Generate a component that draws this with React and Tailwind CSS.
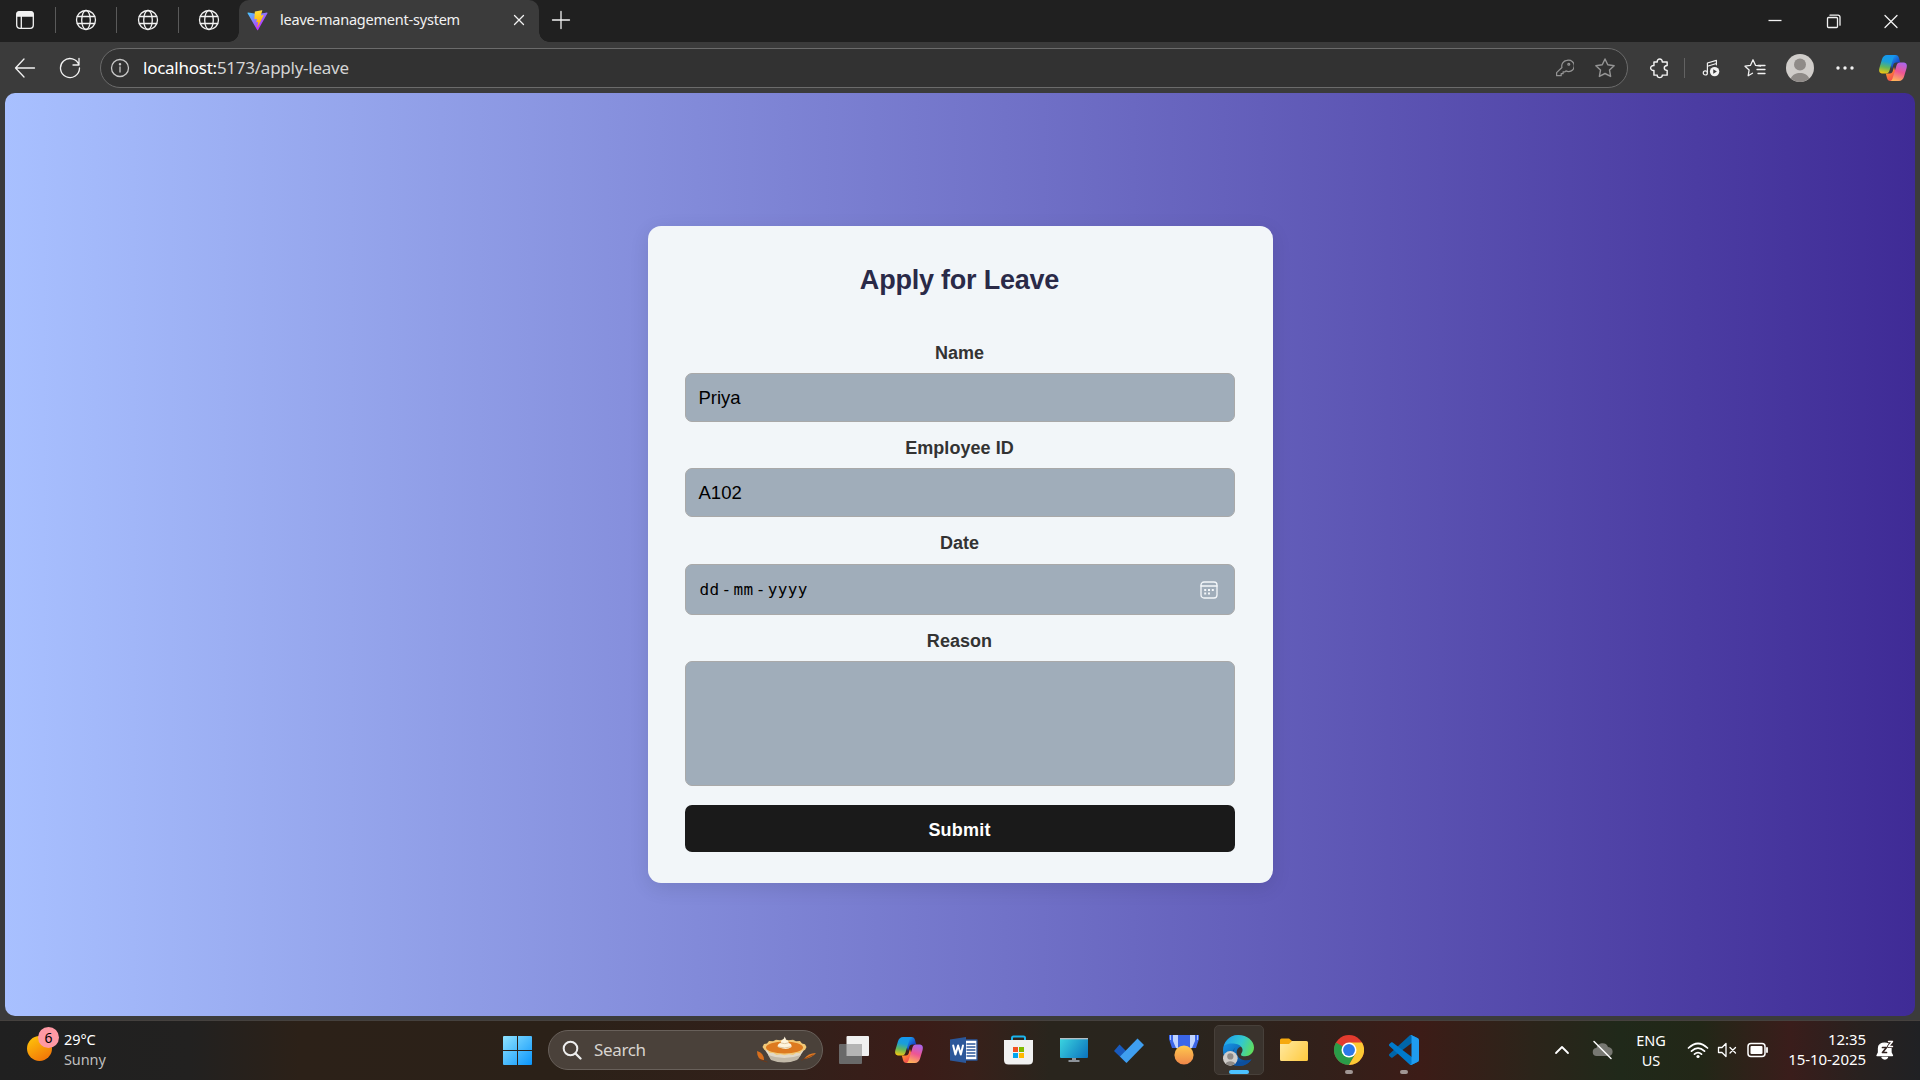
const ui = "font-['Noto_Sans','Segoe_UI',sans-serif]";

function Svg({ w = 20, h = w, vb = "0 0 20 20", className = "", children }) {
  return (
    <svg width={w} height={h} viewBox={vb} className={"block shrink-0 " + className} fill="none" stroke="currentColor" strokeWidth="1.3" strokeLinecap="round" strokeLinejoin="round">
      {children}
    </svg>
  );
}

const Globe = () => (
  <Svg w={22} vb="0 0 22 22">
    <circle cx="11" cy="11" r="9.5" />
    <ellipse cx="11" cy="11" rx="4.3" ry="9.5" />
    <path d="M2.4 7.5h17.2M2.4 14.5h17.2" />
  </Svg>
);

const Vite = () => (
  <Svg w={21} vb="0 0 410 404">
    <defs>
      <linearGradient id="va" x1="6" y1="33" x2="235" y2="344" gradientUnits="userSpaceOnUse"><stop stopColor="#41D1FF" /><stop offset="1" stopColor="#BD34FE" /></linearGradient>
      <linearGradient id="vb" x1="194" y1="9" x2="236" y2="292" gradientUnits="userSpaceOnUse"><stop stopColor="#FFEA83" /><stop offset=".08" stopColor="#FFDD35" /><stop offset="1" stopColor="#FFA800" /></linearGradient>
    </defs>
    <path stroke="none" fill="url(#va)" d="M399.641 59.525 215.643 388.545C211.844 395.338 202.084 395.378 198.228 388.618L10.582 59.556C6.381 52.19 12.68 43.267 21.028 44.759L205.223 77.682C206.398 77.892 207.601 77.89 208.776 77.676L389.119 44.806C397.439 43.289 403.768 52.143 399.641 59.525Z" />
    <path stroke="none" fill="url(#vb)" d="M292.965 1.574 156.801 28.255C154.563 28.694 152.906 30.59 152.771 32.866L144.395 174.33C144.198 177.662 147.258 180.248 150.51 179.498L188.42 170.749C191.967 169.931 195.172 173.055 194.443 176.622L183.18 231.775C182.422 235.487 185.907 238.661 189.532 237.56L212.947 230.446C216.577 229.344 220.065 232.527 219.297 236.242L201.398 322.875C200.278 328.294 207.486 331.249 210.492 326.603L212.5 323.5 323.454 102.072C325.312 98.365 322.108 94.137 318.036 94.923L279.014 102.454C275.347 103.161 272.227 99.746 273.262 96.158L298.731 7.867C299.767 4.273 296.636.855 292.965 1.574Z" />
  </Svg>
);

const Copilot = ({ size = 30, id }) => (
  <Svg w={size} vb="0 0 30 30">
    <defs>
      <linearGradient id={id + "a"} x1="10" y1="2" x2="6" y2="21" gradientUnits="userSpaceOnUse"><stop stopColor="#1597f0" /><stop offset=".35" stopColor="#1b9fd8" /><stop offset=".65" stopColor="#64b75a" /><stop offset="1" stopColor="#fcc70c" /></linearGradient>
      <linearGradient id={id + "b"} x1="24" y1="9" x2="17" y2="28" gradientUnits="userSpaceOnUse"><stop stopColor="#a866ee" /><stop offset=".5" stopColor="#ee5593" /><stop offset="1" stopColor="#ffb657" /></linearGradient>
      <linearGradient id={id + "c"} x1="14" y1="2" x2="21" y2="9" gradientUnits="userSpaceOnUse"><stop stopColor="#1ba6f5" /><stop offset="1" stopColor="#1743c5" /></linearGradient>
      <linearGradient id={id + "d"} x1="9" y1="21" x2="15" y2="28" gradientUnits="userSpaceOnUse"><stop stopColor="#ff8a30" /><stop offset="1" stopColor="#ef3d57" /></linearGradient>
    </defs>
    <g stroke="none">
      <path fill={`url(#${id}c)`} d="M10 2h7.500c2 0 3 1.200 3.500 3l1.200 4.500h-4c-1.800 0-2.600 1-3 2.500L14 16z" />
      <path fill={`url(#${id}d)`} d="M20 28h-7.500c-2 0-3-1.200-3.500-3l-1.200-4.500h4c1.800 0 2.600-1 3-2.500L16 14z" />
      <path fill={`url(#${id}a)`} d="M16.500 2H9C6.500 2 4.800 3.800 4 6.300L1.400 15c-.9 3.400.2 5.500 3.500 5.500h3c2 0 3-1 3.600-3l3.700-12c.5-2 1-3 2.500-3.300z" />
      <path fill={`url(#${id}b)`} d="M13.500 28H21c2.500 0 4.200-1.800 5-4.300l2.600-8.700c.9-3.400-.2-5.500-3.500-5.500h-3c-2 0-3 1-3.600 3l-3.700 12c-.5 2-1 3-2.500 3.300z" />
    </g>
  </Svg>
);

const Avatar = ({ size }) => (
  <Svg w={size} vb="0 0 28 28">
    <circle cx="14" cy="14" r="14" fill="#d0cdca" stroke="none" />
    <circle cx="14" cy="10.500" r="6" fill="#8f8b88" stroke="none" />
    <path d="M4.800 24.500C6.500 20.500 10 19 14 19s7.500 1.500 9.200 5.500A14 14 0 0 1 14 28a14 14 0 0 1-9.200-3.500z" fill="#8f8b88" stroke="none" />
  </Svg>
);

function TabStrip() {
  return (
    <div className="flex h-[42px] bg-[#202020] text-[#f2f2f2]">
      <div className="flex w-[239px] items-center pb-[2px]">
        <div className="flex w-[55px] justify-center pr-[5px]">
          <Svg w={20} vb="0 0 20 20"><rect x="1.700" y="1.700" width="16.600" height="16.600" rx="3" /><path d="M2 3.500Q2 2 4 2h12q2 0 2 1.500V6H2z" fill="currentColor" /><path d="M6.300 6v12" /></Svg>
        </div>
        <i className="h-[26px] w-px bg-[#5a5a5a]" />
        <div className="flex w-[60px] justify-center"><Globe /></div>
        <i className="h-[26px] w-px bg-[#5a5a5a]" />
        <div className="flex w-[61px] justify-center"><Globe /></div>
        <i className="h-[26px] w-px bg-[#5a5a5a]" />
        <div className="flex w-[59px] justify-center"><Globe /></div>
      </div>
      <div className="relative flex w-[300px] items-center rounded-t-[10px] bg-[#3b3b3b] pb-[2px] pl-[8px] pr-[13px]">
        <i className="absolute -left-[10px] bottom-0 size-[10px] bg-[radial-gradient(circle_at_0_0,#202020_9.500px,#3b3b3b_10px)]" />
        <i className="absolute -right-[10px] bottom-0 size-[10px] bg-[radial-gradient(circle_at_100%_0,#202020_9.500px,#3b3b3b_10px)]" />
        <Vite />
        <span className="ml-[12px] flex-1 text-[14.500px] tracking-[-0.22px] whitespace-nowrap">leave-management-system</span>
        <Svg w={14} vb="0 0 14 14"><path d="M2.500 2.500l9 9M11.500 2.500l-9 9" /></Svg>
      </div>
      <div className="flex w-[43px] items-center justify-center pb-[2px]"><Svg w={20}><path d="M10 1.500v17M1.500 10h17" /></Svg></div>
      <div className="flex flex-1 justify-end pt-[13px]">
        <div className="flex w-[58px] justify-center"><Svg w={16} vb="0 0 16 16"><path d="M1.500 7.500h13" strokeLinecap="butt" /></Svg></div>
        <div className="flex w-[58px] justify-center pl-px"><Svg w={16} vb="0 0 16 16"><rect x="1.500" y="4.500" width="10" height="10" rx="1" /><path d="M4 2.200h8a2 2 0 0 1 2 2v8" /></Svg></div>
        <div className="flex w-[58px] justify-center"><Svg w={16} vb="0 0 16 16"><path d="M2 2.500l12 12M14 2.500l-12 12" /></Svg></div>
      </div>
    </div>
  );
}

const Star = () => <path d="M10 1.800l2.500 5.300 5.800.8-4.200 4 1 5.800L10 15l-5.100 2.700 1-5.800-4.200-4 5.800-.8z" />;

function Toolbar() {
  return (
    <div className="flex h-[51px] items-center pt-px text-[#f2f2f2]">
      <div className="flex w-[50px] justify-center"><Svg w={22} vb="0 0 22 22"><path d="M20.500 11H1.500M10 2L1.500 11l8.500 9" /></Svg></div>
      <div className="flex w-[50px] justify-center pr-[10px]"><Svg w={22} vb="0 0 22 22"><path d="M20 8A9.500 9.500 0 1 0 20.500 11M20 1.500V8h-6" /></Svg></div>
      <div className="flex h-10 w-[1528px] items-center rounded-full border border-[#6b6b6b] bg-[#323232] pl-[9px] pr-[11px]">
        <Svg w={20} className="text-[#c8c8c8]"><circle cx="10" cy="10" r="8.500" /><path d="M10 9v5" /><circle cx="10" cy="6.300" r=".6" fill="currentColor" /></Svg>
        <span className="ml-[13px] flex-1 text-[17px] tracking-[-0.25px] text-white">localhost:<span className="text-[#d4d4d4]">5173/apply-leave</span></span>
        <Svg w={19} className="mr-[20px] text-[#949494]"><path d="M12.500 1.500a6 6 0 1 1-1 11l-1 1H8.500v2h-2v2h-4.800v-3.200L7.300 9a6 6 0 0 1 5.200-7.500z" /><circle cx="14.500" cy="5.500" r="1" /></Svg>
        <Svg w={22} className="text-[#949494]"><Star /></Svg>
      </div>
      <div className="flex w-[56px] justify-center pl-[8px]"><Svg w={22}><path d="M4.500 4.500h3c-.5-3.500 5-3.500 4.500 0h4.500v3.300c-3.500.2-3.500 4.200 0 4.400v4.300H12c.5 3-5 3-4.500 0h-3v-4.300c-4 .3-4-4.700 0-4.400z" /></Svg></div>
      <i className="h-5 w-px bg-[#626262]" />
      <div className="flex w-[52px] justify-center"><Svg w={18}><path d="M6 15V4.500l10-3v5M6 8L16 5" /><circle cx="3.700" cy="15.500" r="2.300" /><circle cx="14" cy="14" r="5.200" fill="currentColor" stroke="none" /><path d="M12.500 11.500v5l4-2.500z" fill="#3b3b3b" stroke="none" /></Svg></div>
      <div className="flex w-[36px] justify-center"><Svg w={22} h={20} vb="0 0 22 20"><path d="M8.500 15.200l-4.300 2.500.9-5.700L1 8.200l5.400-.8L9 1.800l2.600 5.600 4.900.8M14 7.500h7M13 11.500h8M14 15.500h7" /></Svg></div>
      <div className="flex w-[54px] justify-center"><Avatar size={28} /></div>
      <div className="flex w-[36px] justify-center"><Svg w={18} h={4} vb="0 0 18 4"><g fill="currentColor" stroke="none"><circle cx="2" cy="2" r="1.700" /><circle cx="9" cy="2" r="1.700" /><circle cx="16" cy="2" r="1.700" /></g></Svg></div>
      <div className="flex flex-1 justify-end pr-[12px]"><Copilot id="top" /></div>
    </div>
  );
}

const label = "block text-center text-[18px] leading-[27px] font-bold tracking-[0.05px] text-[#333]";
const field = "block w-full rounded-[7px] border border-[#a9a9a9] bg-[#a0adba]";

function LeaveForm() {
  return (
    <form className="flex h-[657px] w-[625px] flex-col rounded-[13px] bg-[#f2f6f9] pl-[37px] pr-[38px] pt-[35px] font-['Liberation_Sans',Arial,sans-serif] shadow-[0_5px_19px_rgba(0,0,0,0.1)]">
      <h2 className="text-center text-[27px] leading-[38px] font-bold tracking-[-0.22px] text-[#2a2a48]">Apply for Leave</h2>
      <label className={label + " mt-[41px]"}>Name</label>
      <div className={field + " mt-[6px] flex h-[49px] items-center pl-[13px] text-[18.500px] text-black"}>Priya</div>
      <label className={label + " mt-[13px]"}>Employee ID</label>
      <div className={field + " mt-[6px] flex h-[49px] items-center pl-[13px] text-[18.500px] text-black"}>A102</div>
      <label className={label + " mt-[13px]"}>Date</label>
      <div className={field + " mt-[7px] flex h-[51px] items-center justify-between pl-[14px] pr-[16px] text-black"}>
        <span className="flex font-['DejaVu_Sans_Mono',monospace] text-[16px] tracking-[0.4px]"><span>dd</span><span className="w-[14px] text-center">-</span><span>mm</span><span className="w-[14px] text-center">-</span><span>yyyy</span></span>
        <Svg w={18} vb="0 0 18 18" className="text-[#f4f7fa]"><rect x="1" y="1" width="16" height="16" rx="3" /><path d="M1 5h16" /><g fill="currentColor" stroke="none"><rect x="4.200" y="8" width="2" height="2" /><rect x="8" y="8" width="2" height="2" /><rect x="11.800" y="8" width="2" height="2" /><rect x="4.200" y="11.500" width="2" height="2" /><rect x="8" y="11.500" width="2" height="2" /></g></Svg>
      </div>
      <label className={label + " mt-[13px]"}>Reason</label>
      <div className={field + " mt-[6px] h-[125px]"} />
      <button type="button" className="mt-[19px] h-[47px] w-full rounded-[7px] bg-[#1a1a1a] pt-[3px] text-[18px] font-bold tracking-[0.2px] text-white">Submit</button>
    </form>
  );
}

const Windows = () => (
  <Svg w={29} vb="0 0 29 29"><defs><linearGradient id="win" x1="0" y1="0" x2="29" y2="29" gradientUnits="userSpaceOnUse"><stop stopColor="#8fe3ff" /><stop offset="1" stopColor="#0a95fb" /></linearGradient></defs><path stroke="none" fill="url(#win)" d="M1 0h13v14H0V1q0-1 1-1zM15 0h13q1 0 1 1v13H15zM0 15h14v14H1q-1 0-1-1zM15 15h14v13q0 1-1 1H15z" /></Svg>
);

const Pie = () => (
  <Svg w={60} h={28} vb="0 0 60 28"><g stroke="none">
    <path d="M1 15q7 2 7 9Q1 24 1 15z" fill="#d96f1d" /><path d="M48 23q4-6 12-6-4 5-12 6z" fill="#e07b24" />
    <path d="M2 23l9 3M46 24l11-5" stroke="#7d350d" strokeWidth=".7" />
    <path d="M9 14h39l-6 9q-13 6-27 0z" fill="#e0d8c8" />
    <path d="M12 19q16 6 33 0l-4 5q-13 5-26 0z" fill="#c2b9a8" />
    <path d="M6.500 11l1.500-3 3-.5L13 5l4 .3 3-1.500 4 .5 4.500-1 4 1 4.500-.5 3 1.500 4-.2 2 2.500 3 .7L50.500 11 49 14l-3 .7-2 2.500-4-.2-3 2-4-.7-4.500 1-4-1-4 .6-3-2-4 .2-2-2.500-3-.5z" fill="#f1c877" />
    <ellipse cx="28.500" cy="11.500" rx="18.500" ry="6" fill="#dd7a20" />
    <path d="M21.500 10.500q.5-3.500 3.500-3.500-.5-2.500 2-3.500 1.500-1 1.500-3 1.500 2 1.500 3.500 3 .5 2.500 3 3.500.5 3 4-6 4-14-.5z" fill="#fff5de" /><path d="M25 7q4 1.500 7 0M22.500 11q6 2 12 0" stroke="#d9c39b" strokeWidth=".9" />
  </g></Svg>
);

const TaskView = () => <Svg w={30} h={28} vb="0 0 30 28"><g stroke="none"><rect x="7.500" width="22.500" height="20" rx="1" fill="#f0f0f0" /><rect y="8" width="23" height="20" rx="1" fill="#696969" /><rect x="7.500" y="8" width="15.500" height="12" fill="#b4b4b4" /></g></Svg>;

const Word = () => <Svg w={28} h={28} vb="0 0 28 28"><g stroke="none"><rect x="12" y="4" width="15" height="20" fill="#fff" /><path d="M17 8h8M17 11h8M17 14h8M17 17h8M17 20h8" stroke="#2b579a" /><rect x="12" y="4" width="15" height="20" stroke="#2b579a" /><path d="M0 3.500L16 1v26L0 24.500z" fill="#2b579a" /></g><path d="M3.200 9.500l2.200 9 2.700-9 2.700 9 2.200-9" stroke="#fff" strokeWidth="2" /></Svg>;

const Store = () => <Svg w={29} h={30} vb="0 0 29 30"><path d="M8 6V3q0-1.500 1.500-1.500h10Q21 1.500 21 3v3" stroke="#1bb5ee" strokeWidth="2" /><g stroke="none"><path d="M0 5h29v20q0 4.500-4.500 4.500h-20Q0 29.500 0 25z" fill="#f1f1f1" /><path d="M9 12h5v5H9z" fill="#f25022" /><path d="M15 12h5v5h-5z" fill="#7fba00" /><path d="M9 18h5v5H9z" fill="#00a4ef" /><path d="M15 18h5v5h-5z" fill="#ffb900" /></g></Svg>;

const Monitor = () => <Svg w={28} h={24} vb="0 0 28 24"><defs><linearGradient id="mon" x1="0" y1="0" x2="28" y2="20" gradientUnits="userSpaceOnUse"><stop stopColor="#3bd5e0" /><stop offset="1" stopColor="#0b72bd" /></linearGradient></defs><g stroke="none"><path d="M12 19h4v3h3.500v2h-11v-2H12z" fill="#8d9399" /><rect width="28" height="20" rx="1" fill="url(#mon)" /><rect width="28" height="1.300" fill="#b5bfc5" /></g></Svg>;

const ToDo = () => <Svg w={30} h={25} vb="0 0 30 25"><g stroke="none"><path d="M0 13l5.500-6.500L17 18l-5 6.500z" fill="#185abd" /><path d="M6 18.500L23.500.500 30 7 12.500 25z" fill="#3f9ff0" /></g></Svg>;

const Medal = () => <Svg w={30} h={30} vb="0 0 30 30"><defs><linearGradient id="med" x1="0" y1="11" x2="0" y2="30" gradientUnits="userSpaceOnUse"><stop stopColor="#ffc84e" /><stop offset="1" stopColor="#ee8449" /></linearGradient></defs><g stroke="none"><path d="M0 0h30v4l-3 9H3L0 4z" fill="#3b66e8" /><path d="M4 0h5v13H7L4 6zM21 0h5v6l-3 7h-2z" fill="#c1d5ff" /><path d="M1 0h1v5H1zM28 0h1v5h-1z" fill="#a7c3ff" /><circle cx="15" cy="20" r="9.600" fill="url(#med)" /></g></Svg>;

const Edge = () => (
  <Svg w={31} vb="0 0 32 32">
    <defs>
      <linearGradient id="e1" x1="4" y1="4" x2="32" y2="16" gradientUnits="userSpaceOnUse"><stop stopColor="#22a5e8" /><stop offset=".5" stopColor="#32c8cf" /><stop offset="1" stopColor="#64e052" /></linearGradient>
      <linearGradient id="e2" x1="0" y1="12" x2="16" y2="32" gradientUnits="userSpaceOnUse"><stop stopColor="#158fe1" /><stop offset="1" stopColor="#0c4f9c" /></linearGradient>
    </defs>
    <g stroke="none">
      <path d="M16 0C7 0 0 7 0 16s7 16 16 16c6 0 11-3 13.500-7-5 2.500-13 1-15-5-1.500-5 2-8 4-8z" fill="url(#e2)" />
      <path d="M1 11C4 3 10 0 16 0c9 0 16 6 16 13 0 6-5 9-9 9-5 0-5-2-3.500-4 2-3 0-8-7-9C8 8.500 4 9 1 11z" fill="url(#e1)" />
      <path d="M13 13c-4 4-3 13 5 15 5 1.500 9-1 11.500-3-4 6-9 7-13 7-7-1-11-13-3.500-19z" fill="#0d4f9e" />
    </g>
    <g transform="translate(0 16.500) scale(.54)" stroke="none"><circle cx="14" cy="14" r="14" fill="#d0cdca" /><circle cx="14" cy="10.500" r="6" fill="#8f8b88" /><path d="M4.800 24.500C7 18 21 18 23.200 24.500A14 14 0 0 1 4.800 24.500z" fill="#8f8b88" /></g>
  </Svg>
);

const Folder = () => <Svg w={28} h={24} vb="0 0 28 24"><defs><linearGradient id="fol" x1="0" y1="3" x2="28" y2="24" gradientUnits="userSpaceOnUse"><stop stopColor="#ffe9a1" /><stop offset="1" stopColor="#ffc93c" /></linearGradient></defs><g stroke="none"><path d="M0 2q0-1.500 1.500-1.500H9L12 3v5H0z" fill="#f6a90e" /><path d="M0 6h9l3-3h14.500Q28 3 28 4.500v17q0 1.500-1.500 1.500h-25Q0 23 0 21.500z" fill="url(#fol)" /></g></Svg>;

const Chrome = () => <Svg w={30} vb="0 0 48 48"><g stroke="none"><circle cx="24" cy="24" r="24" fill="#e33b2e" /><path d="M3.200 12A24 24 0 0 0 24 48l10.400-18L24 24z" fill="#2a9c48" /><path d="M44.800 12A24 24 0 0 1 24 48l10.400-18L34 18 24 12z" fill="#fcc934" /><circle cx="24" cy="24" r="12" fill="#fff" /><circle cx="24" cy="24" r="9.500" fill="#2b78e8" /></g></Svg>;

const VSCode = () => <Svg w={30} vb="0 0 100 100"><g stroke="none"><path d="M96.500 10.700L75.900.800c-2.400-1.200-5.200-.7-7.100 1.200L1.300 63.600c-1.800 1.700-1.800 4.500 0 6.200l5.500 5c1.500 1.300 3.700 1.400 5.300.2L93.400 13.400c2.700-2.100 6.600-.100 6.600 3.300v-.2c0-2.500-1.400-4.700-3.500-5.800z" fill="#0065a9" /><path d="M96.500 89.300l-20.600 9.900c-2.400 1.200-5.200.7-7.100-1.200L1.300 36.400c-1.800-1.700-1.800-4.500 0-6.200l5.500-5c1.500-1.300 3.700-1.400 5.300-.2l81.300 61.600c2.700 2.100 6.600.1 6.600-3.300v.2c0 2.500-1.400 4.700-3.500 5.800z" fill="#007acc" /><path d="M75.900 99.100c-2.400 1.200-5.200.7-7.100-1.200 2.300 2.300 6.200.7 6.200-2.600V4.700c0-3.300-3.900-4.900-6.200-2.600 1.900-1.900 4.700-2.400 7.100-1.200l20.600 9.900c2.200 1 3.500 3.200 3.500 5.600v67.200c0 2.400-1.400 4.600-3.500 5.600z" fill="#1f9cf0" /></g></Svg>;

const apps = [[TaskView], [() => <Copilot id="task" />], [Word], [Store], [Monitor], [ToDo], [Medal], [Edge, "active"], [Folder], [Chrome, "open"], [VSCode, "open"]];

function Taskbar() {
  return (
    <div className="flex h-[60px] border-t border-[#45413e] bg-[linear-gradient(90deg,#202020_0,#222120_190px,#2c2118_300px,#2b2118_560px,#33201a_800px,#3b1c18_920px,#38201a_970px,#29251d_1050px,#29251e_1180px,#32201a_1320px,#3c1c17_1420px,#2c241a_1530px,#20291a_1620px,#222717_1700px,#3a1d1b_1790px,#28211f_1860px,#202124_1920px)] pb-px text-white">
      <div className="flex w-[501px] pl-[27px] pt-[6px]">
        <div className="relative h-[34px] w-[37px]">
          <i className="absolute left-0 top-[9px] size-[25px] rounded-full bg-[linear-gradient(150deg,#ffca0a,#f06a08)]" />
          <b className="absolute left-[11px] top-0 flex size-[21px] items-center justify-center rounded-full bg-[#ff99a4] text-[14px] font-normal text-black">6</b>
        </div>
        <div className="pt-[2px] text-[14.500px] leading-[20px] tracking-[-0.1px]"><div>29°C</div><div className="text-[#bebebe]">Sunny</div></div>
      </div>
      <div className="flex items-center">
        <div className="w-[47px] pl-[2px]"><Windows /></div>
        <div className="mr-[3px] flex h-10 w-[275px] items-center rounded-full border border-[#68605a] bg-[#4a413a] pl-[13px] pr-[6px]">
          <Svg w={20} className="text-[#eee]"><circle cx="8.500" cy="8.500" r="6.800" strokeWidth="2" /><path d="M13.500 13.500l5 5" strokeWidth="2.300" /></Svg>
          <span className="ml-[12px] flex-1 text-[17px] tracking-[-0.35px] text-[#d8d4d0]">Search</span>
          <Pie />
        </div>
        {apps.map(([Icon, state], i) => (
          <div key={i} className="flex w-[55px] justify-center">
            <div className={"relative flex h-[50px] w-[50px] items-center justify-center rounded-[5px] " + (state === "active" ? "border border-[#47403a] bg-[#3a332d]" : "")}>
              <Icon />
              {state === "active" && <i className="absolute bottom-0 left-[14px] h-[4px] w-[20px] rounded-full bg-[#4cc2ff]" />}
              {state === "open" && <i className="absolute bottom-px left-[21px] h-[4px] w-[8px] rounded-full bg-[#a09694]" />}
            </div>
          </div>
        ))}
      </div>
      <div className="flex flex-1 items-center justify-end pr-[25px] text-[14.500px] leading-[20px] tracking-[-0.1px]">
        <Svg w={16} vb="0 0 16 16"><path d="M2 11l6-6 6 6" strokeWidth="1.800" /></Svg>
        <Svg w={22} h={20} vb="0 0 22 20" className="ml-[22px]"><path d="M5 16a4 4 0 0 1-.5-8C5 3 14 1 16 7c6 0 6 9 1 9z" fill="#777872" stroke="none" /><path d="M2 1.500l17 17" strokeWidth="1.500" /></Svg>
        <div className="ml-[20px] w-[34px] text-center">ENG<br />US</div>
        <Svg w={22} h={20} vb="0 0 22 20" className="ml-[19px]"><path d="M1.500 8q9.500-9 19 0M4.500 11.200q6.500-6 13 0M7.500 14.200q3.500-3.200 7 0" strokeWidth="1.700" /><circle cx="11" cy="16.500" r="1.600" fill="currentColor" stroke="none" /></Svg>
        <Svg w={20} className="ml-[8px]"><path d="M1.500 7.500H5l4-4v13l-4-4H1.500zM13 7.500l5.500 5.500M18.500 7.500L13 13" /></Svg>
        <Svg w={21} h={16} vb="0 0 21 16" className="ml-[10px]"><rect x="1" y="1.500" width="17" height="13" rx="3" strokeWidth="1.500" /><rect x="3.500" y="4" width="12" height="8" rx="1" fill="currentColor" stroke="none" /><path d="M20 6v4" strokeWidth="1.800" /></Svg>
        <div className="ml-[19px] w-[79px] pb-[2px] text-right text-[15px] tracking-[-0.05px] whitespace-nowrap">12:35<br />15-10-2025</div>
        <Svg w={19} h={20} vb="0 0 19 20" className="ml-[10px]"><path d="M1 15.500l1.500-3V8C2.500 1.500 14.500 1.500 15 8v4.500l1.500 3z" fill="currentColor" /><path d="M6 17.500q3 3 5.500 0z" fill="currentColor" /><path d="M6.500 7.500h4l-4 5h4" stroke="#302220" strokeWidth="1.700" /><path d="M12.500 1.500h4l-4 5h4" stroke="#302220" strokeWidth="3" /><path d="M12.500 1.500h4l-4 5h4" stroke="#fff" strokeWidth="1.400" /></Svg>
      </div>
    </div>
  );
}

export default function App() {
  return (
    <div className={"flex h-[1080px] w-[1920px] flex-col overflow-hidden bg-[#3b3b3b] " + ui}>
      <TabStrip />
      <Toolbar />
      <main className="mx-[5px] flex h-[923px] justify-center rounded-[10px] bg-[linear-gradient(90deg,#a8c0ff,#3f2b96)] pt-[133px]"><LeaveForm /></main>
      <div className="h-[4px] shrink-0" />
      <Taskbar />
    </div>
  );
}
